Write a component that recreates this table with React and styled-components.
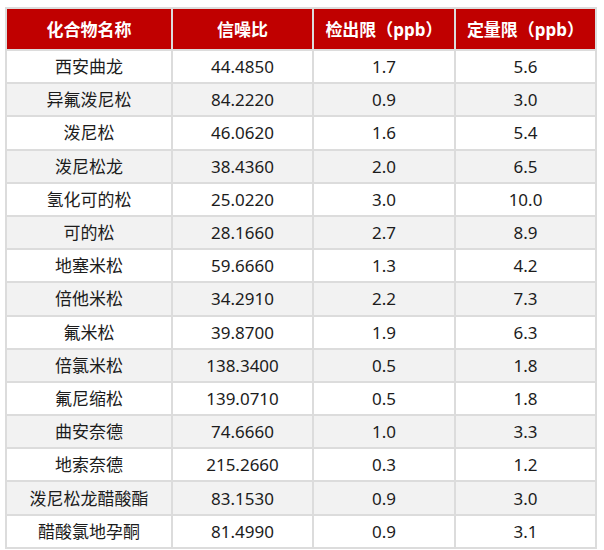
import React from "react";
import styled, { createGlobalStyle } from "styled-components";

const Global = createGlobalStyle`
  html, body { margin: 0; padding: 0; background: #ffffff; }
  body { font-family: "Noto Sans", "Noto Sans CJK SC", sans-serif; }
`;

const Page = styled.div`
  padding: 7px 7px 0 5px;
  width: 604px;
  box-sizing: border-box;
`;

const Table = styled.table`
  width: 592px;
  border-collapse: collapse;
  table-layout: fixed;
  font-size: 17px;
  color: #1c1c1c;
`;

const Col = styled.col`
  width: ${(p) => p.$w}px;
`;

const HeadCell = styled.th`
  height: 40px;
  padding: 0;
  background: #c00000;
  color: #ffffff;
  font-weight: 700;
  text-align: center;
  vertical-align: middle;
  border: 2px solid #dcdcdc;
  line-height: 1;
`;

const Row = styled.tr`
  background: ${(p) => (p.$alt ? "#f2f2f2" : "#ffffff")};
`;

const Cell = styled.td`
  height: 31.2px;
  padding: 0;
  text-align: center;
  vertical-align: middle;
  border: 2px solid #dcdcdc;
  line-height: 1;
`;

const rows = [
  ["西安曲龙", "44.4850", "1.7", "5.6"],
  ["异氟泼尼松", "84.2220", "0.9", "3.0"],
  ["泼尼松", "46.0620", "1.6", "5.4"],
  ["泼尼松龙", "38.4360", "2.0", "6.5"],
  ["氢化可的松", "25.0220", "3.0", "10.0"],
  ["可的松", "28.1660", "2.7", "8.9"],
  ["地塞米松", "59.6660", "1.3", "4.2"],
  ["倍他米松", "34.2910", "2.2", "7.3"],
  ["氟米松", "39.8700", "1.9", "6.3"],
  ["倍氯米松", "138.3400", "0.5", "1.8"],
  ["氟尼缩松", "139.0710", "0.5", "1.8"],
  ["曲安奈德", "74.6660", "1.0", "3.3"],
  ["地索奈德", "215.2660", "0.3", "1.2"],
  ["泼尼松龙醋酸酯", "83.1530", "0.9", "3.0"],
  ["醋酸氯地孕酮", "81.4990", "0.9", "3.1"],
];

export default function App() {
  return (
    <>
      <Global />
      <Page>
        <Table>
          <colgroup>
            <Col $w={166} />
            <Col $w={141} />
            <Col $w={142} />
            <Col $w={141} />
          </colgroup>
          <thead>
            <tr>
              <HeadCell>化合物名称</HeadCell>
              <HeadCell>信噪比</HeadCell>
              <HeadCell>检出限（ppb）</HeadCell>
              <HeadCell>定量限（ppb）</HeadCell>
            </tr>
          </thead>
          <tbody>
            {rows.map((r, i) => (
              <Row key={i} $alt={i % 2 === 1}>
                {r.map((c, j) => (
                  <Cell key={j}>{c}</Cell>
                ))}
              </Row>
            ))}
          </tbody>
        </Table>
      </Page>
    </>
  );
}
